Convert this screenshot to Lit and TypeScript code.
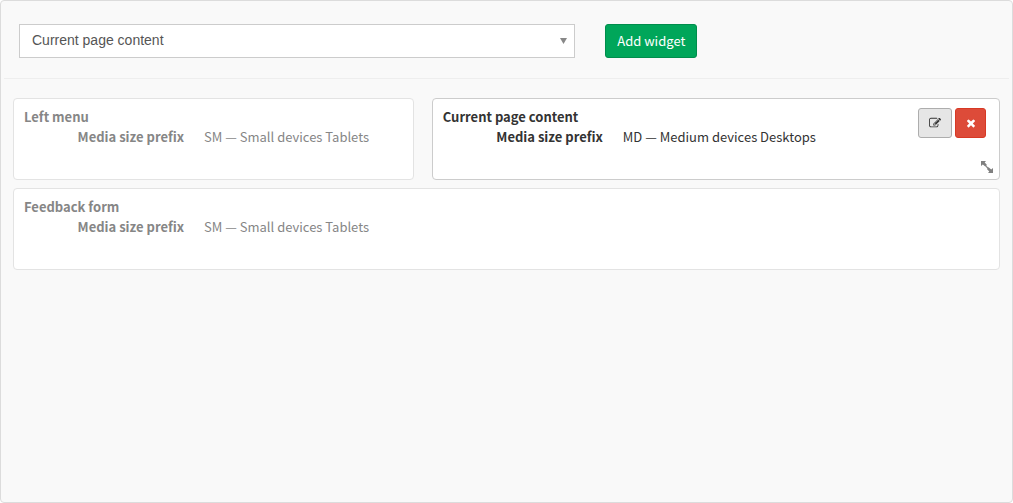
import { LitElement, html, css, svg } from "lit";
import { customElement, property, state } from "lit/decorators.js";
import { classMap } from "lit/directives/class-map.js";

const sans = css`"Source Sans Pro", "Noto Sans CJK SC", sans-serif`;

@customElement("widget-card")
export class WidgetCard extends LitElement {
  @property() heading = "";
  @property() media = "";
  @property({ type: Boolean }) active = false;

  static styles = css`
    :host {
      display: block;
    }
    .card {
      position: relative;
      display: flex;
      justify-content: space-between;
      box-sizing: border-box;
      height: 100%;
      min-height: 82px;
      padding: 8px 13px 8px 10px;
      border: 1px solid #e3e3e3;
      border-radius: 4px;
      background: #fff;
      color: #868686;
      font: 13px/20px ${sans};
    }
    .card.active {
      border-color: #ccc;
      color: #333;
    }
    .heading {
      margin: 0;
      font-size: 13px;
      font-weight: 700;
    }
    .details {
      display: grid;
      grid-template-columns: 160px auto;
      column-gap: 20px;
      margin: 0;
    }
    .term {
      font-weight: 700;
      text-align: right;
    }
    .value {
      margin: 0;
    }
    .actions {
      display: flex;
      align-items: flex-start;
      gap: 3px;
      padding-top: 1px;
    }
    .action {
      display: flex;
      align-items: center;
      justify-content: center;
      box-sizing: border-box;
      width: 34px;
      height: 30px;
      padding: 0;
      border: 1px solid #adadad;
      border-radius: 3px;
      background: #e6e6e6;
      color: #333;
    }
    .action.remove {
      width: 31px;
      border-color: #d73925;
      background: #dd4b39;
      color: #fff;
    }
    .icon {
      display: block;
      width: 12px;
      height: 12px;
      fill: currentColor;
    }
    .resize {
      position: absolute;
      right: 5px;
      bottom: 5px;
      width: 14px;
      height: 14px;
      fill: #808080;
    }
  `;

  render() {
    return html`
      <article class=${classMap({ card: true, active: this.active })}>
        <div>
          <h2 class="heading">${this.heading}</h2>
          <dl class="details">
            <dt class="term">Media size prefix</dt>
            <dd class="value">${this.media}</dd>
          </dl>
        </div>
        ${this.active ? this.renderTools() : null}
      </article>
    `;
  }

  private renderTools() {
    return html`
      <div class="actions">
        <button class="action" type="button" aria-label="Edit">
          <svg class="icon" viewBox="0 0 1792 1792" aria-hidden="true">
            ${svg`<path d="M888 1184l116-116-152-152-116 116v56h96v96h56zm440-720q-16-16-33 1l-350 350q-17 17-1 33t33-1l350-350q17-17 1-33zm80 594v190q0 119-84.5 203.5t-203.5 84.5h-832q-119 0-203.5-84.5t-84.5-203.5v-832q0-119 84.5-203.5t203.5-84.5h832q63 0 117 25 15 7 18 23 3 17-9 29l-49 49q-14 14-32 8-23-6-45-6h-832q-66 0-113 47t-47 113v832q0 66 47 113t113 47h832q66 0 113-47t47-113v-126q0-13 9-22l64-64q15-15 35-7t20 29zm-96-738l288 288-672 672h-288v-288zm444 132l-92 92-288-288 92-92q28-28 68-28t68 28l152 152q28 28 28 68t-28 68z"/>`}
          </svg>
        </button>
        <button class="action remove" type="button" aria-label="Remove">
          <svg class="icon" viewBox="0 0 1792 1792" aria-hidden="true">
            ${svg`<path d="M1490 1322q0 40-28 68l-136 136q-28 28-68 28t-68-28l-294-294-294 294q-28 28-68 28t-68-28l-136-136q-28-28-28-68t28-68l294-294-294-294q-28-28-28-68t28-68l136-136q28-28 68-28t68 28l294 294 294-294q28-28 68-28t68 28l136 136q28 28 28 68t-28 68l-294 294 294 294q28 28 28 68z"/>`}
          </svg>
        </button>
      </div>
      <svg class="resize" viewBox="0 0 14 14" aria-hidden="true">
        ${svg`<path d="M1 1h5L4.700 2.600 7 5 5.300 6.600 2.800 4.500 1 6zM13 13H8l1.300-1.500L6.900 8.900 8.600 7.200 11.200 9.500 13 8z"/><path d="M6 5.500l2.500 2.200-1 1L5.400 6.300z"/>`}
      </svg>
    `;
  }
}

@customElement("app-root")
export class AppRoot extends LitElement {
  @state() private widgets = [
    { heading: "Left menu", media: "SM — Small devices Tablets", span: 5, active: false },
    { heading: "Current page content", media: "MD — Medium devices Desktops", span: 7, active: true },
    { heading: "Feedback form", media: "SM — Small devices Tablets", span: 12, active: false },
  ];

  static styles = css`
    :host {
      display: block;
    }
    .panel {
      box-sizing: border-box;
      min-height: 100vh;
      padding: 0 3px;
      border: 1px solid #dcdcdc;
      border-radius: 4px;
      background: #f9f9f9;
    }
    .toolbar {
      display: grid;
      grid-template-columns: repeat(12, 1fr);
      column-gap: 30px;
      padding: 23px 15px 20px;
      border-bottom: 1px solid #eee;
    }
    .picker {
      position: relative;
      grid-column: span 7;
    }
    .select {
      display: block;
      appearance: none;
      box-sizing: border-box;
      width: 100%;
      height: 34px;
      margin: 0;
      padding: 0 28px 2px 12px;
      border: 1px solid #ccc;
      border-radius: 0;
      background: #fff;
      color: #555;
      font: 14px/20px "Liberation Sans", Arial, sans-serif;
    }
    .arrow {
      position: absolute;
      right: 8px;
      top: 14px;
      width: 7px;
      height: 6px;
      fill: #888;
      pointer-events: none;
    }
    .add {
      grid-column: span 5;
      justify-self: start;
      box-sizing: border-box;
      height: 34px;
      padding: 0 11px;
      border: 1px solid #008d4c;
      border-radius: 3px;
      background: #00a65a;
      color: #fff;
      font: 13px/20px ${sans};
    }
    .widgets {
      display: grid;
      grid-template-columns: repeat(12, 1fr);
      gap: 8px 18px;
      padding: 19px 9px;
    }
    .span-5 {
      grid-column: span 5;
    }
    .span-7 {
      grid-column: span 7;
    }
    .span-12 {
      grid-column: span 12;
    }
  `;

  render() {
    return html`
      <main class="panel">
        <div class="toolbar">
          <div class="picker">
            <select class="select" aria-label="Widget">
              <option selected>Current page content</option>
              <option>Left menu</option>
              <option>Feedback form</option>
            </select>
            <svg class="arrow" viewBox="0 0 7 6" aria-hidden="true"><path d="M0 0h7L3.500 6z" /></svg>
          </div>
          <button class="add" type="button">Add widget</button>
        </div>
        <section class="widgets">
          ${this.widgets.map(
            (w) => html`<widget-card
              class=${`span-${w.span}`}
              .heading=${w.heading}
              .media=${w.media}
              .active=${w.active}
            ></widget-card>`,
          )}
        </section>
      </main>
    `;
  }
}
